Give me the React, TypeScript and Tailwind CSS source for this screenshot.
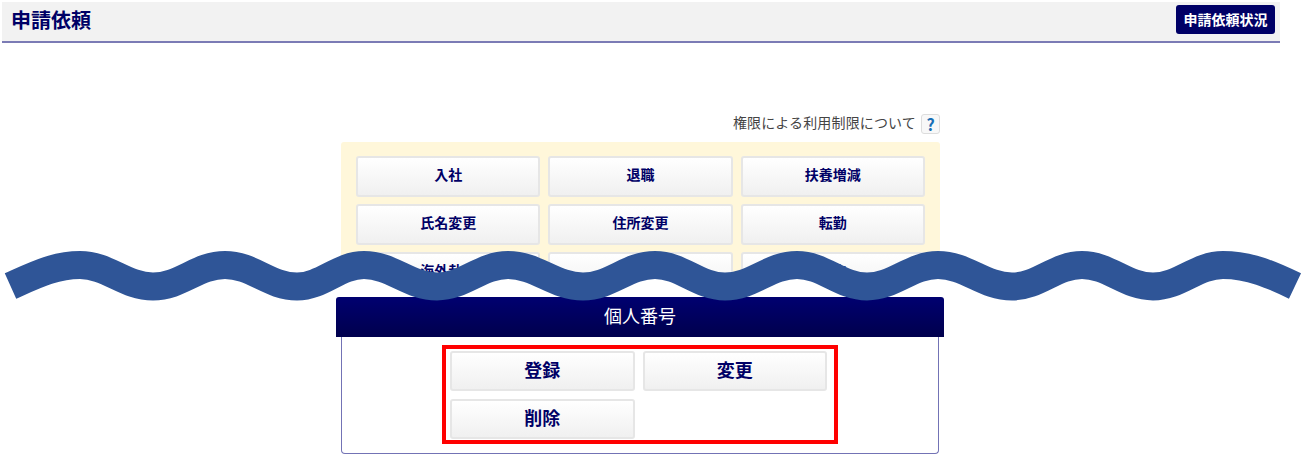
import React from 'react';

const FONT = "font-['Noto_Sans_CJK_JP','Noto_Sans',sans-serif]";

const menuItems = ['入社', '退職', '扶養増減', '氏名変更', '住所変更', '転勤', '海外赴任', '休職', '出向'];

// peak and trough x positions of the wave, read off the picture
const waveXs = [80, 153, 225, 297, 364, 437, 508, 583, 655, 725, 797, 867, 938, 1012, 1082, 1153, 1223];

function buildWave() {
  let d = 'M10.5 286 C35 275 55 265 80 265';
  waveXs.forEach((x, i) => {
    if (i === 0) return;
    const prev = waveXs[i - 1];
    const y = i % 2 === 0 ? 265 : 286.5;
    const prevY = i % 2 === 0 ? 286.5 : 265;
    const k = (x - prev) * 0.38;
    d += ` C${prev + k} ${prevY} ${x - k} ${y} ${x} ${y}`;
  });
  return d + ' C1250 265 1272 275 1295 286';
}

function MenuButton({ label, size = 'small' }: { label: string; size?: 'small' | 'large' }) {
  return (
    <button
      className={`rounded-[3px] border-2 border-[#e6e6e6] bg-gradient-to-b from-white to-[#f0f0f0] font-bold text-[#000066] ${
        size === 'large' ? 'h-10 pb-[4px] text-[18px]' : 'h-[41px] pb-[5px] text-sm'
      }`}
    >
      {label}
    </button>
  );
}

function WaveOverlay() {
  const wave = buildWave();
  return (
    <svg className="absolute left-0 top-0" width="1302" height="320" viewBox="0 0 1302 320" fill="none">
      <path d={`${wave} L1295 297 L10.5 297 Z`} fill="#ffffff" />
      <path d={wave} stroke="#2f5597" strokeWidth="28" />
    </svg>
  );
}

export default function App() {
  return (
    <div className={`relative h-[467px] w-[1302px] overflow-hidden bg-white ${FONT}`}>
      <div className="h-[297px] overflow-hidden pt-[2px]">
        <header className="ml-[2px] flex h-[41px] w-[1278px] items-center justify-between border-b-2 border-b-[#7b7bb5] bg-[#f2f2f2] pl-[9px] pr-[5px]">
          <h1 className="pb-[3px] text-[20px] font-bold leading-none text-[#000066]">申請依頼</h1>
          <button className="mb-[4px] h-[29px] w-[99px] rounded-[3px] bg-[#000066] pb-[2px] text-sm font-bold text-white">
            申請依頼状況
          </button>
        </header>

        <div className="ml-[341px] mt-[70px] w-[599px]">
          <div className="flex h-[21px] items-center justify-end gap-[5px]">
            <span className="pb-1 text-sm tracking-[0.15px] text-[#444444]">権限による利用制限について</span>
            <span className="flex h-5 w-[19px] items-center justify-center rounded-[3px] border border-[#dddddd] bg-[#f8f8f8] text-base font-bold text-[#1a6fb5]">
              ?
            </span>
          </div>
          <div className="mt-2 h-[200px] rounded-[3px] bg-[#fff7da] px-[15px] py-[14px]">
            <div className="grid grid-cols-3 gap-x-2 gap-y-[7px]">
              {menuItems.map((item) => (
                <MenuButton key={item} label={item} />
              ))}
            </div>
          </div>
        </div>
      </div>

      <section className="ml-[336px] w-[608px]">
        <div className="flex h-10 items-center justify-center rounded-t-[3px] bg-gradient-to-b from-[#000070] to-[#00004d] pb-[3px] text-[18px] text-white">
          個人番号
        </div>
        <div className="ml-[5px] h-[117px] w-[598px] rounded-b-[4px] border border-t-0 border-[#7373b5] pt-2">
          <div className="ml-[100px] h-[99px] w-[396px] border-4 border-[#ff0000] px-1 pt-[2px]">
            <div className="grid w-[377px] grid-cols-2 gap-2">
              <MenuButton label="登録" size="large" />
              <MenuButton label="変更" size="large" />
              <MenuButton label="削除" size="large" />
            </div>
          </div>
        </div>
      </section>

      <WaveOverlay />
    </div>
  );
}
